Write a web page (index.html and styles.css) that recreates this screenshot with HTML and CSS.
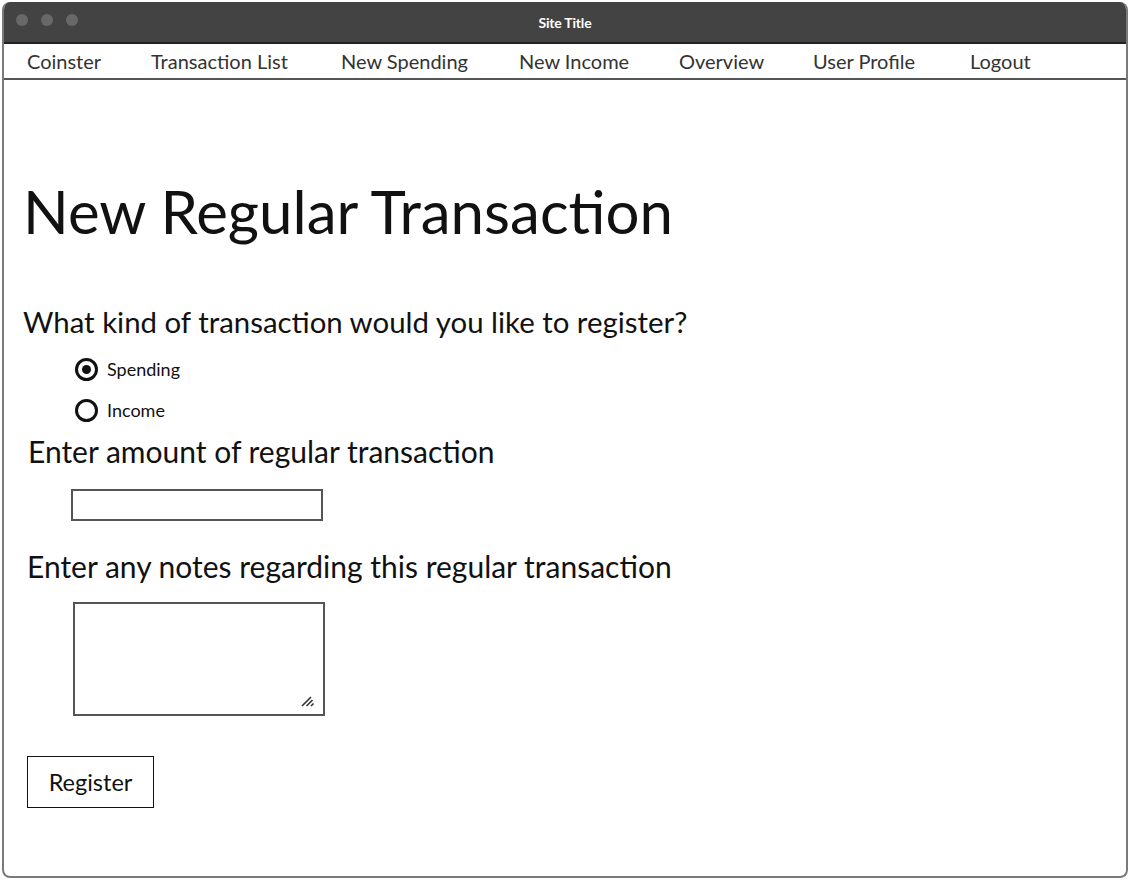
FILE: index.html
```html
<!DOCTYPE html>
<html>
<head>
<meta charset="utf-8">
<link rel="stylesheet" href="styles.css">
</head>
<body>
<div class="window">
  <div class="titlebar">
    <div class="dots"><span class="dot"></span><span class="dot"></span><span class="dot"></span></div>
    <div class="site-title">Site Title</div>
  </div>
  <nav class="nav">
    <a class="nav-item n1">Coinster</a>
    <a class="nav-item n2">Transaction List</a>
    <a class="nav-item n3">New Spending</a>
    <a class="nav-item n4">New Income</a>
    <a class="nav-item n5">Overview</a>
    <a class="nav-item n6">User Profile</a>
    <a class="nav-item n7">Logout</a>
  </nav>
  <main class="content">
    <h1 class="heading">New Regular Transaction</h1>
    <p class="question">What kind of transaction would you like to register?</p>
    <div class="radios">
      <label class="radio"><span class="circle checked"></span>Spending</label>
      <label class="radio"><span class="circle"></span>Income</label>
    </div>
    <p class="label label-amount">Enter amount of regular transaction</p>
    <div class="input"></div>
    <p class="label label-notes">Enter any notes regarding this regular transaction</p>
    <div class="textarea">
      <svg class="grip" width="14" height="14" viewBox="0 0 14 14"><path d="M1 13 L10 4 M5.5 13 L11.5 7 M10 13 L12.5 10.5" stroke="#333" stroke-width="1.6" fill="none"/></svg>
    </div>
    <div class="button">Register</div>
  </main>
</div>
</body>
</html>
```
FILE: styles.css
```css
html, body {
  margin: 0;
  padding: 0;
  background: #fff;
}
body {
  font-family: Lato, "Open Sans", sans-serif;
  color: #111;
}
.window {
  margin: 2px 0 0 2px;
  width: 1126px;
  height: 876px;
  box-sizing: border-box;
  border: 2px solid #7a7a7a;
  border-top: none;
  border-radius: 8px;
  overflow: hidden;
  display: flex;
  flex-direction: column;
}
.titlebar {
  height: 40px;
  background: #434343;
  position: relative;
  display: flex;
  align-items: center;
  justify-content: center;
  flex-shrink: 0;
}
.dots {
  position: absolute;
  left: 12px;
  top: 12px;
  display: flex;
  gap: 13px;
}
.dot {
  width: 12px;
  height: 12px;
  border-radius: 50%;
  background: #686868;
}
.site-title {
  color: #fff;
  font-size: 14px;
  font-weight: bold;
  letter-spacing: -0.2px;
}
.nav {
  position: relative;
  height: 38px;
  box-sizing: border-box;
  border-top: 2px solid #222;
  border-bottom: 2px solid #555;
  display: flex;
  align-items: center;
  flex-shrink: 0;
  font-size: 20px;
  color: #333;
}
.nav-item {
  position: absolute;
}
.n1 { left: 23px; }
.n2 { left: 147px; }
.n3 { left: 337px; }
.n4 { left: 515px; }
.n5 { left: 675px; }
.n6 { left: 809px; }
.n7 { left: 966px; }
.content {
  display: flex;
  flex-direction: column;
  align-items: flex-start;
  padding-left: 19px;
}
.heading {
  margin: 95px 0 0 0;
  font-weight: normal;
  font-size: 60px;
  line-height: 72px;
}
.question {
  margin: 58px 0 0 0;
  font-size: 29.4px;
  line-height: 34px;
}
.radios {
  margin: 18px 0 0 52px;
  display: flex;
  flex-direction: column;
  gap: 17px;
}
.radio {
  display: flex;
  align-items: center;
  gap: 9px;
  font-size: 18px;
  line-height: 24px;
}
.circle {
  width: 17px;
  height: 17px;
  border: 3px solid #111;
  border-radius: 50%;
  box-sizing: content-box;
  position: relative;
}
.circle.checked::after {
  content: "";
  position: absolute;
  left: 4px;
  top: 4px;
  width: 9px;
  height: 9px;
  border-radius: 50%;
  background: #111;
}
.label {
  margin: 12px 0 0 5px;
  font-size: 30px;
  line-height: 34px;
}
.label-notes {
  margin: 28px 0 0 4px;
}
.input {
  margin: 21px 0 0 48px;
  width: 252px;
  height: 32px;
  box-sizing: border-box;
  border: 2px solid #555;
}
.textarea {
  margin: 19px 0 0 50px;
  width: 252px;
  height: 114px;
  box-sizing: border-box;
  border: 2px solid #555;
  position: relative;
}
.grip {
  position: absolute;
  right: 8px;
  bottom: 7px;
}
.button {
  margin: 40px 0 0 4px;
  width: 127px;
  height: 52px;
  box-sizing: border-box;
  border: 1px solid #111;
  display: flex;
  align-items: center;
  justify-content: center;
  font-size: 23.5px;
}
```
